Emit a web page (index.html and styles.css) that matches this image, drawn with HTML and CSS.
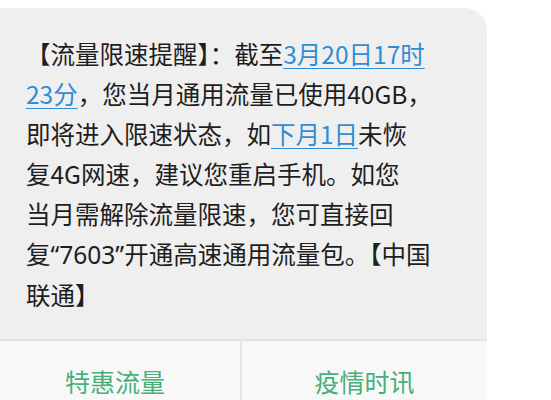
FILE: index.html
```html
<!DOCTYPE html>
<html lang="zh-CN">
<head>
    <meta charset="UTF-8">
    <meta name="viewport" content="width=device-width, initial-scale=1.0">
    <title>短信</title>
    <link rel="stylesheet" href="styles.css">
</head>
<body>
    <!-- Message bubble -->
    <div class="bubble">
        <p class="message">【流量限速提醒】：截至<a href="#">3月20日17时<br>23分</a>，您当月通用流量已使用40GB，<br>即将进入限速状态，如<a href="#">下月1日</a>未恢<br>复4G网速，建议您重启手机。如您<br>当月需解除流量限速，您可直接回<br>复<span class="quote">“7603”</span>开通高速通用流量包。【中国<br>联通】</p>

        <!-- Quick reply buttons -->
        <div class="actions">
            <a class="action" href="#">特惠流量</a>
            <a class="action" href="#">疫情时讯</a>
        </div>
    </div>
</body>
</html>
```

FILE: styles.css
```css
body {
    margin: 0;
    padding: 8px 0 0 0;
    background-color: #ffffff;
    font-family: "Noto Sans CJK SC", "Noto Sans", sans-serif;
    overflow: hidden;
}

/* Grey message bubble */
.bubble {
    width: 497px;
    margin-left: -10px;
    background-color: #efefef;
    border-radius: 16px 22px 0 0;
    overflow: hidden;
}

.message {
    margin: 0;
    padding: 26px 20px 24px 36px;
    font-size: 24.5px;
    line-height: 40px;
    color: #1e1e1e;
    white-space: nowrap;
}

.message a {
    color: #2f8dd3;
    text-decoration: underline;
    text-underline-offset: 4px;
    text-decoration-thickness: 1px;
}

.quote {
    font-family: "Noto Sans", sans-serif;
}

/* Buttons under the message */
.actions {
    display: grid;
    grid-template-columns: 250px 1fr;
    border-top: 2px solid #e3e3e3;
    background-color: #f8f8f8;
}

.action {
    display: flex;
    justify-content: center;
    padding-top: 22px;
    height: 70px;
    font-size: 25px;
    color: #46b078;
    text-decoration: none;
}

.action + .action {
    border-left: 2px solid #e6e6e6;
}
```
